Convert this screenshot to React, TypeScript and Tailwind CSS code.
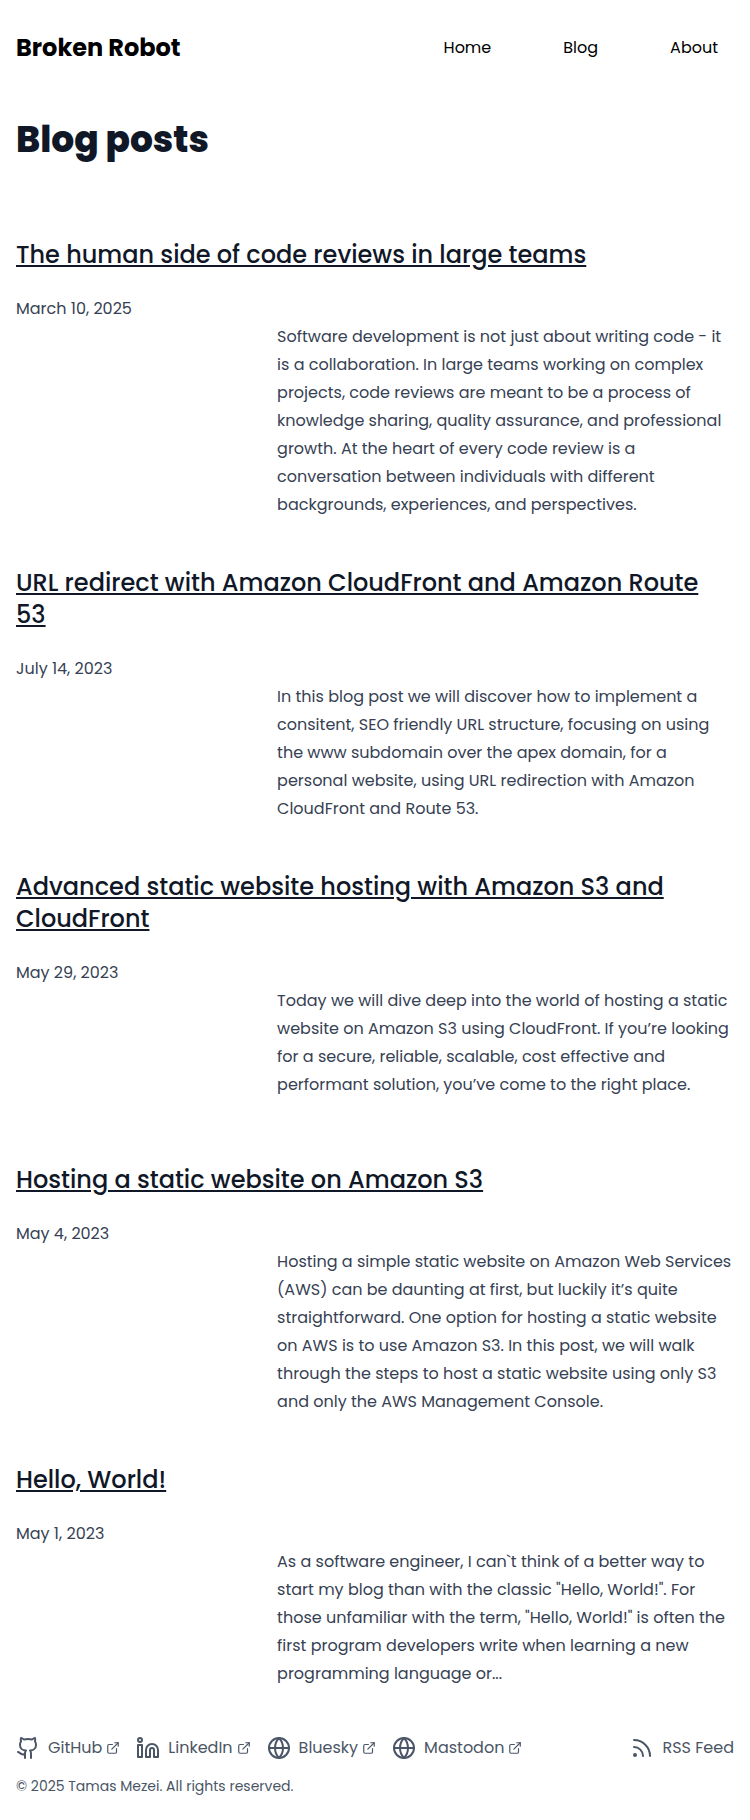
import { ExternalLink, Github, Globe, Linkedin, Rss } from "lucide-react";
import type { LucideIcon } from "lucide-react";

type Post = { title: string; date: string; summary: string };

const posts: Post[] = [
  {
    title: "The human side of code reviews in large teams",
    date: "March 10, 2025",
    summary:
      "Software development is not just about writing code - it is a collaboration. In large teams working on complex projects, code reviews are meant to be a process of knowledge sharing, quality assurance, and professional growth. At the heart of every code review is a conversation between individuals with different backgrounds, experiences, and perspectives.",
  },
  {
    title: "URL redirect with Amazon CloudFront and Amazon Route 53",
    date: "July 14, 2023",
    summary:
      "In this blog post we will discover how to implement a consitent, SEO friendly URL structure, focusing on using the www subdomain over the apex domain, for a personal website, using URL redirection with Amazon CloudFront and Route 53.",
  },
  {
    title: "Advanced static website hosting with Amazon S3 and CloudFront",
    date: "May 29, 2023",
    summary:
      "Today we will dive deep into the world of hosting a static website on Amazon S3 using CloudFront. If you’re looking for a secure, reliable, scalable, cost effective and performant solution, you’ve come to the right place.",
  },
  {
    title: "Hosting a static website on Amazon S3",
    date: "May 4, 2023",
    summary:
      "Hosting a simple static website on Amazon Web Services (AWS) can be daunting at first, but luckily it’s quite straightforward. One option for hosting a static website on AWS is to use Amazon S3. In this post, we will walk through the steps to host a static website using only S3 and only the AWS Management Console.",
  },
  {
    title: "Hello, World!",
    date: "May 1, 2023",
    summary:
      'As a software engineer, I can`t think of a better way to start my blog than with the classic "Hello, World!". For those unfamiliar with the term, "Hello, World!" is often the first program developers write when learning a new programming language or...',
  },
];

const socials: { label: string; icon: LucideIcon }[] = [
  { label: "GitHub", icon: Github },
  { label: "LinkedIn", icon: Linkedin },
  { label: "Bluesky", icon: Globe },
  { label: "Mastodon", icon: Globe },
];

export default function App() {
  return (
    <div className="bg-white px-4 font-['Poppins','Inter',sans-serif] text-base font-normal text-gray-700">
      <header className="flex h-24 items-center justify-between text-black">
        <a href="#" className="text-2xl font-bold">
          Broken Robot
        </a>
        <nav className="flex gap-18 pr-4">
          <a href="#">Home</a>
          <a href="#">Blog</a>
          <a href="#">About</a>
        </nav>
      </header>

      <main>
        <h1 className="mt-6 text-4xl leading-10 font-extrabold text-gray-900">Blog posts</h1>
        <div className="mt-[79px] flex flex-col gap-12">
          {posts.map((post) => (
            <article key={post.date}>
              <h2 className="text-2xl font-medium text-gray-900">
                <a href="#" className="underline">
                  {post.title}
                </a>
              </h2>
              <time className="mt-6 block leading-7">{post.date}</time>
              <div className="grid grid-cols-11">
                <p className="col-span-7 col-start-5 min-h-[129px] leading-7">{post.summary}</p>
              </div>
            </article>
          ))}
        </div>
      </main>

      <footer className="mt-12 pb-5 text-gray-600">
        <div className="flex items-center justify-between">
          <div className="flex gap-4">
            {socials.map(({ label, icon: Icon }) => (
              <a key={label} href="#" className="flex items-center">
                <Icon className="mr-2 size-6" />
                {label}
                <ExternalLink className="ml-1 size-3.5" />
              </a>
            ))}
          </div>
          <a href="#" className="flex items-center gap-2">
            <Rss className="size-6" />
            RSS Feed
          </a>
        </div>
        <p className="mt-4 text-sm">© 2025 Tamas Mezei. All rights reserved.</p>
      </footer>
    </div>
  );
}
